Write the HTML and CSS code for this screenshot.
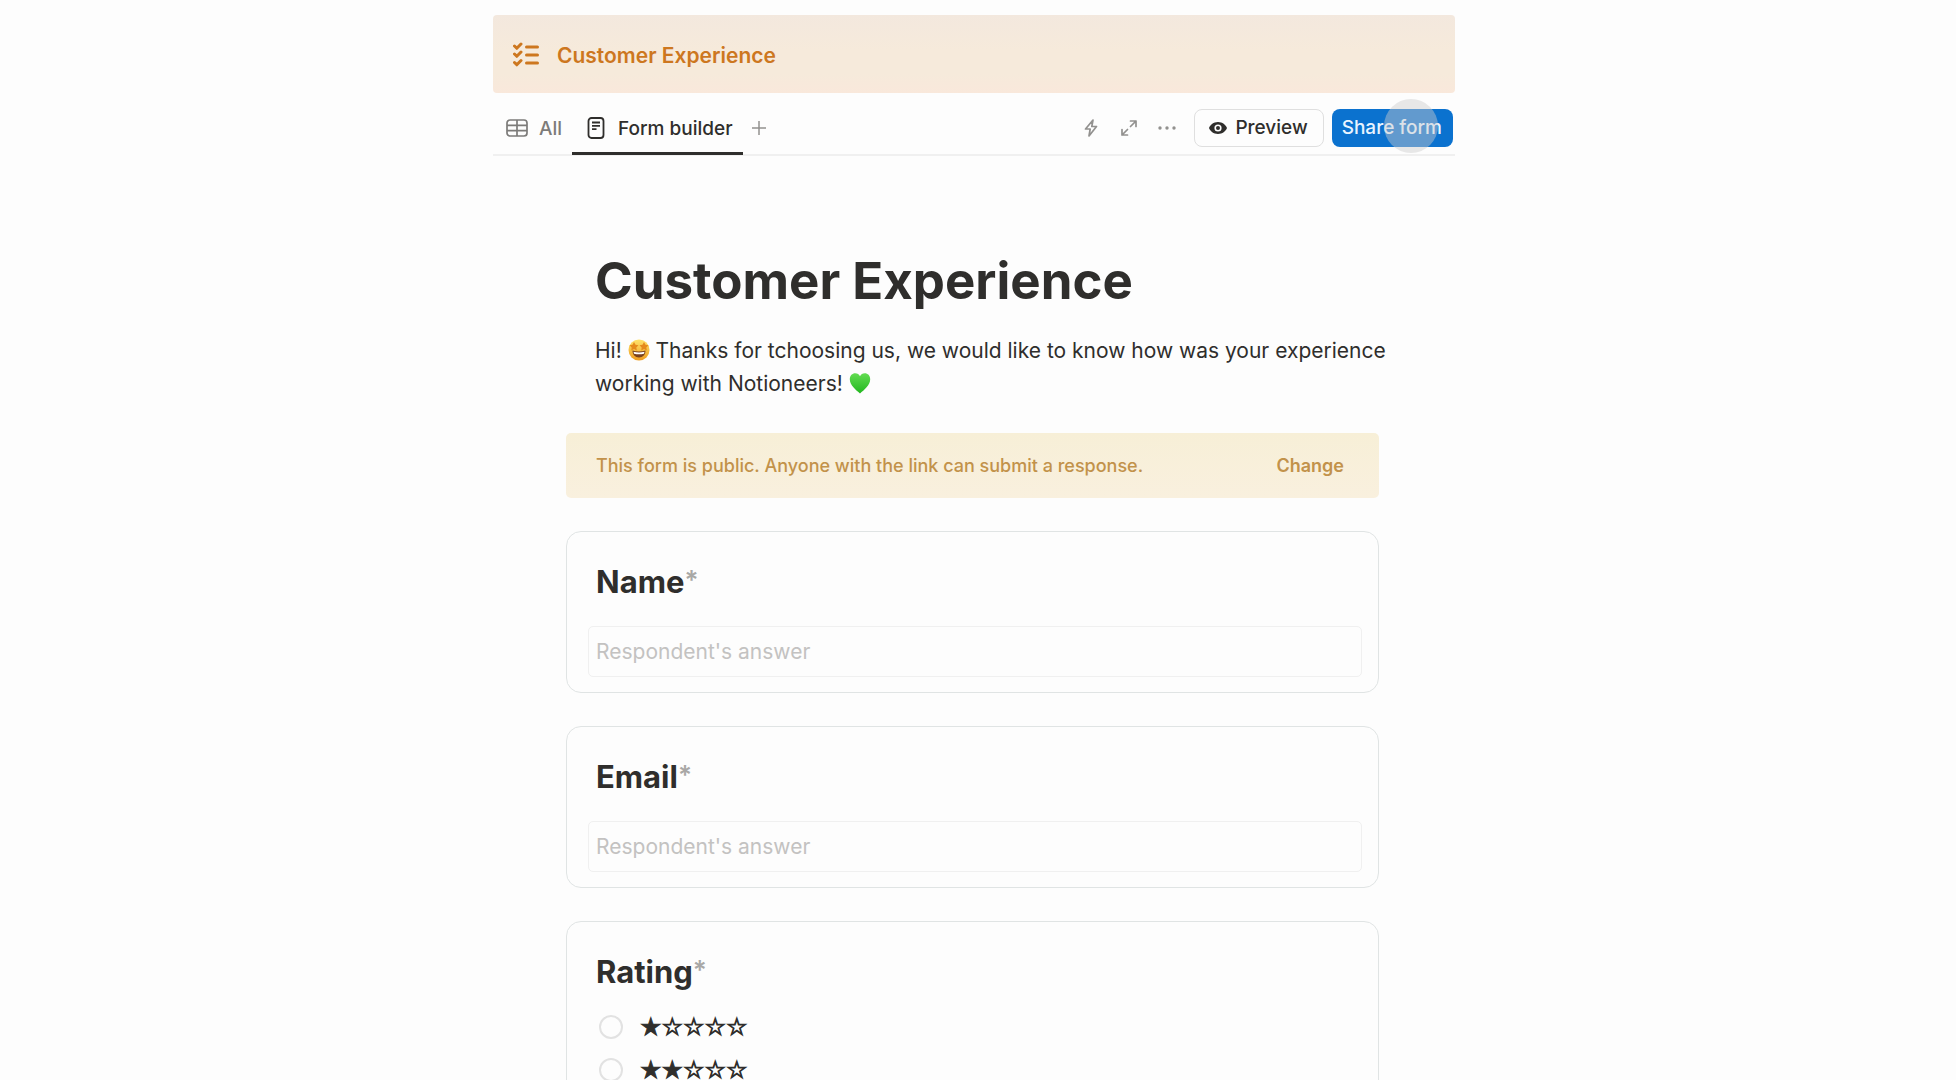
FILE: index.html
```html
<!DOCTYPE html>
<html lang="en">
<head>
<meta charset="utf-8">
<meta name="viewport" content="width=device-width, initial-scale=1">
<title>Customer Experience</title>
<link rel="stylesheet" href="styles.css">
</head>
<body>
<div class="page">
  <header class="banner">
    <svg class="banner-icon" viewBox="0 0 26 26" width="26" height="26" fill="none" stroke="currentColor" stroke-width="3" stroke-linecap="round" stroke-linejoin="round" aria-hidden="true">
      <path d="M1.500 4l2.300 2.300L8 2M1.500 12l2.300 2.300L8 10M1.500 20.500l2.300 2.300L8 18.500M13.500 5h11M13.500 13h11M13.500 21h11"/>
    </svg>
    <span>Customer Experience</span>
  </header>

  <div class="toolbar">
    <nav class="tabs" aria-label="Views">
      <a class="tab" href="#all">
        <svg viewBox="0 0 22 18" width="22" height="18" fill="none" stroke="currentColor" stroke-width="1.7" aria-hidden="true">
          <rect x="1" y="1" width="20" height="16" rx="3"/><path d="M1 6.300h20M1 11.600h20M11 1v16"/>
        </svg>
        <span>All</span>
      </a>
      <a class="tab tab-active" href="#builder" aria-current="page">
        <svg viewBox="0 0 18 22" width="18" height="22" fill="none" stroke="currentColor" stroke-width="1.800" aria-hidden="true">
          <rect x="1.500" y="1" width="15" height="20" rx="3"/><path d="M5 5.500h8M5 8.800h8M5 12.100h4.500"/>
        </svg>
        <span>Form builder</span>
      </a>
      <button class="icon-button add" type="button" aria-label="Add view">
        <svg viewBox="0 0 16 16" width="16" height="16" fill="none" stroke="currentColor" stroke-width="1.500"><path d="M8 1v14M1 8h14"/></svg>
      </button>
    </nav>
    <div class="actions">
      <div class="icons">
        <button class="icon-button" type="button" aria-label="Automations">
          <svg viewBox="0 0 18 18" width="18" height="18" fill="none" stroke="currentColor" stroke-width="1.700" stroke-linejoin="round"><path d="M11 1L3.500 10h4.700L7 17l7.500-9.500H9.800z"/></svg>
        </button>
        <button class="icon-button" type="button" aria-label="Expand">
          <svg viewBox="0 0 18 18" width="18" height="18" fill="none" stroke="currentColor" stroke-width="1.700" stroke-linecap="round" stroke-linejoin="round"><path d="M10.500 2H16v5.500M16 2l-5.500 5.500M7.500 16H2v-5.500M2 16l5.500-5.500"/></svg>
        </button>
        <button class="icon-button" type="button" aria-label="More">
          <svg viewBox="0 0 18 18" width="18" height="18" fill="currentColor"><circle cx="2" cy="9" r="1.700"/><circle cx="9" cy="9" r="1.700"/><circle cx="16" cy="9" r="1.700"/></svg>
        </button>
      </div>
      <button class="button" type="button">
        <svg viewBox="0 0 20 14" width="20" height="14" aria-hidden="true"><path fill="currentColor" fill-rule="evenodd" d="M10 1C5.500 1 2.300 3.800 1 7c1.300 3.200 4.500 6 9 6s7.700-2.800 9-6c-1.300-3.200-4.500-6-9-6zm0 2.400a3.600 3.600 0 1 1 0 7.200 3.600 3.600 0 0 1 0-7.200z"/><circle cx="10" cy="7" r="2" fill="currentColor"/></svg>
        Preview
      </button>
      <div class="share">
        <button class="button button-primary" type="button">Share form</button>
        <span class="pointer"></span>
      </div>
    </div>
  </div>

  <main class="form">
    <h1>Customer Experience</h1>
    <p class="intro">Hi! <svg class="emoji" viewBox="0 0 22 22" aria-hidden="true">
        <defs><linearGradient id="face" x1="0" y1="0" x2="0" y2="1"><stop offset="0" stop-color="#ffe36a"/><stop offset="1" stop-color="#ed9c20"/></linearGradient></defs>
        <circle cx="11" cy="11" r="10.500" fill="url(#face)"/>
        <path d="M4.500 11.500q6.500 2.200 13 0c0 4-2.500 7-6.500 7s-6.500-3-6.500-7z" fill="#79401c"/>
        <path d="M5.500 12.700q5.500 1.500 11 0l-.5 2q-5 1-10 0z" fill="#fff"/>
        <path d="M6 3l1.500 2.700 3 .500-2.200 2.200.5 3L6 10 3.200 11.400l.5-3L1.500 6.200l3-.5zM16 3l1.500 2.700 3 .500-2.200 2.200.5 3L16 10l-2.800 1.400.5-3-2.200-2.200 3-.5z" fill="#e58a1c"/>
      </svg> Thanks for tchoosing us, we would like to know how was your experience working with Notioneers! <svg class="emoji" viewBox="0 0 22 22" aria-hidden="true">
        <defs><linearGradient id="heart" x1="0" y1="0" x2="0" y2="1"><stop offset="0" stop-color="#62dc51"/><stop offset="1" stop-color="#22b71f"/></linearGradient></defs>
        <path d="M11 21.500C7 18 .8 13.500.8 7.300.8 3.500 3.300 1.300 6.200 1.300c2.200 0 3.900 1.100 4.800 3 .9-1.900 2.600-3 4.800-3 2.900 0 5.400 2.200 5.400 6C21.200 13.500 15 18 11 21.500z" fill="url(#heart)"/>
      </svg></p>

    <div class="notice">
      <span>This form is public. Anyone with the link can submit a response.</span>
      <button class="change" type="button">Change</button>
    </div>

    <section class="card">
      <h2><label for="name">Name</label><span class="required">*</span></h2>
      <input class="answer" id="name" type="text" placeholder="Respondent's answer">
    </section>

    <section class="card">
      <h2><label for="email">Email</label><span class="required">*</span></h2>
      <input class="answer" id="email" type="email" placeholder="Respondent's answer">
    </section>

    <section class="card">
      <h2 id="rating">Rating<span class="required">*</span></h2>
      <div class="options" role="radiogroup" aria-labelledby="rating">
        <label class="option"><input type="radio" name="rating" value="1"><span>★☆☆☆☆</span></label>
        <label class="option"><input type="radio" name="rating" value="2"><span>★★☆☆☆</span></label>
      </div>
    </section>
  </main>
</div>
</body>
</html>
```

FILE: styles.css
```css
*, *::before, *::after { box-sizing: border-box; }

body {
  margin: 0;
  background: #fdfdfd;
  color: #2f2e2c;
  font-family: Inter, "Liberation Sans", sans-serif;
  font-size: 21px;
}

button {
  margin: 0;
  padding: 0;
  border: 0;
  background: none;
  color: inherit;
  font: inherit;
}

.page {
  height: 100vh;
  overflow: hidden;
  padding: 15px 8px 0 0;
}

.banner, .toolbar, .form {
  width: 100%;
  max-width: 962px;
  margin: 0 auto;
}

.banner {
  display: flex;
  align-items: center;
  gap: 18px;
  height: 78px;
  padding: 2px 20px 0;
  border-radius: 4px;
  background: linear-gradient(#f3e8de, #f6eadb 45%, #f6eadb 75%, #f9e8db);
  color: #cd771f;
  font-size: 21px;
  font-weight: 600;
}

.toolbar {
  display: flex;
  justify-content: space-between;
  height: 63px;
  border-bottom: 2px solid #f0f0f0;
}

.tabs { display: flex; }

.tab {
  display: flex;
  align-items: center;
  gap: 11px;
  height: 62px;
  padding: 8px 10px 0 13px;
  color: #7c7b79;
  font-size: 19px;
  font-weight: 500;
  text-decoration: none;
}

.tab-active {
  gap: 13px;
  padding: 11px 10px 0 15px;
  border-bottom: 3px solid #2f2e2c;
  color: #2f2e2c;
}

.icon-button {
  display: flex;
  align-items: center;
  color: #92918f;
}

.add { padding: 8px 8px 0; }

.actions {
  display: flex;
  align-items: center;
  gap: 8px;
  padding: 8px 2px 0 0;
}

.icons {
  display: flex;
  gap: 20px;
  margin-right: 10px;
}

.button {
  display: flex;
  align-items: center;
  justify-content: center;
  gap: 7px;
  height: 38px;
  padding: 0 15px 0 13px;
  border: 1px solid #dfdfdf;
  border-radius: 8px;
  font-size: 19px;
  font-weight: 500;
}

.button-primary {
  padding: 0 11px 0 10px;
  border: 0;
  background: #0b72cf;
  color: #e9f4ff;
}

.share { position: relative; }

.pointer {
  position: absolute;
  top: -10px;
  right: 15px;
  width: 54px;
  height: 54px;
  border-radius: 50%;
  background: rgba(205, 205, 205, 0.45);
}

.form { padding: 91px 76px 0 73px; }

h1 {
  margin: 0 29px;
  font-size: 51px;
  line-height: 68px;
  font-weight: 700;
}

.intro {
  margin: 19px -24px 33px 29px;
  line-height: 33px;
}

.emoji {
  width: 22px;
  height: 22px;
  vertical-align: -3px;
}

.notice {
  display: flex;
  align-items: center;
  justify-content: space-between;
  height: 65px;
  margin-bottom: 33px;
  padding: 0 35px 0 30px;
  border-radius: 5px;
  background: linear-gradient(#f7efd7, #f9f0de);
  color: #c2924a;
  font-size: 18px;
  font-weight: 500;
}

.change { font-weight: 600; }

.card {
  margin-bottom: 33px;
  padding: 30px 16px 15px 21px;
  border: 1px solid #e0e4e4;
  border-radius: 15px;
}

h2 {
  margin: 0 8px;
  font-size: 31px;
  line-height: 40px;
  font-weight: 700;
}

.required {
  color: #a9a8a6;
  font-size: 26px;
  line-height: 24px;
  font-weight: 600;
  vertical-align: 4px;
}

.answer {
  display: block;
  width: 100%;
  height: 51px;
  margin-top: 24px;
  padding: 0 7px;
  border: 1px solid #f0f0f0;
  border-radius: 5px;
  background: transparent;
  color: inherit;
  font: inherit;
}

.answer::placeholder {
  color: #c3c2c1;
  opacity: 1;
}

.options {
  display: flex;
  flex-direction: column;
  margin: 13px 11px 0;
}

.option {
  display: flex;
  align-items: center;
  gap: 17px;
  height: 43px;
  font-family: "DejaVu Sans", sans-serif;
  font-size: 24px;
  -webkit-text-stroke: 1px currentColor;
}

.option input {
  width: 24px;
  height: 24px;
  margin: 0;
  border: 2px solid #e2e2e2;
  border-radius: 50%;
  appearance: none;
}
```
